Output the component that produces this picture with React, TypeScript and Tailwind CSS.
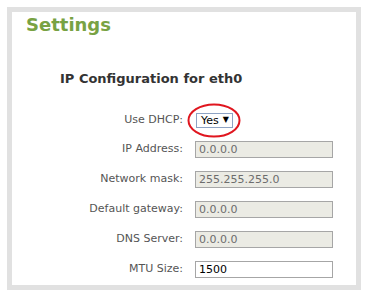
import React from 'react';

const fields = [
  { label: 'IP Address:', value: '0.0.0.0', readOnly: true },
  { label: 'Network mask:', value: '255.255.255.0', readOnly: true },
  { label: 'Default gateway:', value: '0.0.0.0', readOnly: true },
  { label: 'DNS Server:', value: '0.0.0.0', readOnly: true },
  { label: 'MTU Size:', value: '1500', readOnly: false },
];

const App: React.FC = () => {
  return (
    <div className="w-[375px] h-[295px] bg-white p-[7px] font-['DejaVu_Sans',Verdana,sans-serif]">
      <div className="w-[354px] h-[283px] border-[5px] border-[#e1e1e1] bg-white">
        <h1 className="mt-[1px] pl-[14px] text-[18px] leading-[24px] font-bold text-[#78a243]">Settings</h1>
        <h2 className="mt-[34px] pl-[48px] text-[13px] leading-[16px] font-bold text-[#333]">
          IP Configuration for eth0
        </h2>

        <div className="mt-[19px] flex flex-col">
          <div className="h-[28px] flex items-center">
            <label className="w-[171px] text-right text-[11px] text-[#555]">Use DHCP:</label>
            <div className="ml-[13px] relative">
              <div className="w-[37px] h-[15px] border border-[#8ea3c4] flex items-center justify-between pl-[4px] pr-[3px] text-[11px] leading-none text-black">
                <span>Yes</span>
                <span className="text-[8px]">▼</span>
              </div>
              <svg className="absolute left-[-9px] top-[-10px]" width="54" height="35" viewBox="0 0 54 35">
                <ellipse cx="27" cy="17.5" rx="25.5" ry="16" fill="none" stroke="#e0161f" strokeWidth="2" />
              </svg>
            </div>
          </div>

          {fields.map((f) => (
            <div key={f.label} className="h-[30px] flex items-center">
              <label className="w-[171px] text-right text-[11px] text-[#555]">{f.label}</label>
              <input
                readOnly
                value={f.value}
                className={
                  f.readOnly
                    ? 'ml-[12px] w-[138px] h-[17px] border border-[#a6a6a6] bg-[#ebebe4] px-[3px] text-[11px] text-[#6d6d6d] outline-none'
                    : 'ml-[12px] w-[138px] h-[17px] border border-[#a6a6a6] bg-white px-[3px] text-[11px] text-black outline-none'
                }
              />
            </div>
          ))}
        </div>
      </div>
    </div>
  );
};

export default App;
